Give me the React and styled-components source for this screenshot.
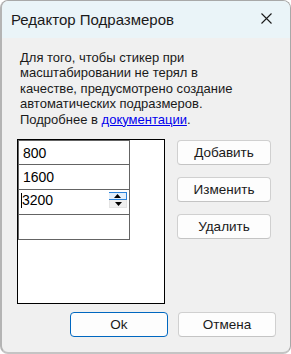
import React from "react";
import styled, { createGlobalStyle } from "styled-components";

const Global = createGlobalStyle`
  html, body {
    margin: 0;
    padding: 0;
    background: #ffffff;
  }
  body {
    font-family: "Liberation Sans", Arial, sans-serif;
  }
`;

const sizes = ["800", "1600", "3200", ""];
const sideButtons = ["Добавить", "Изменить", "Удалить"];

function Spinner() {
  return (
    <Spin>
      <SpinHalf active>
        <svg width="7" height="4" viewBox="0 0 7 4">
          <path d="M0 4 L3.5 0 L7 4 Z" fill="#000" />
        </svg>
      </SpinHalf>
      <SpinHalf>
        <svg width="7" height="4" viewBox="0 0 7 4">
          <path d="M0 0 L3.5 4 L7 0 Z" fill="#000" />
        </svg>
      </SpinHalf>
    </Spin>
  );
}

export default function App() {
  return (
    <>
      <Global />
      <Window>
        <TitleBar>
          <Title>Редактор Подразмеров</Title>
          <Close>
            <svg width="11" height="11" viewBox="0 0 11 11">
              <path d="M0.5 0.5 L10.5 10.5 M10.5 0.5 L0.5 10.5" stroke="#1a1a1a" strokeWidth="1.1" />
            </svg>
          </Close>
        </TitleBar>
        <Body>
          <Description>
            Для того, чтобы стикер при масштабировании не терял в качестве,
            предусмотрено создание автоматических подразмеров.
            <br />
            Подробнее в <Link>документации</Link>.
          </Description>
          <Content>
            <ListBox>
              <Grid>
                {sizes.map((s, i) => (
                  <Cell key={i} editing={i === 2}>
                    {i === 2 && <Caret />}
                    <CellText editing={i === 2}>{s}</CellText>
                    {i === 2 && <Spinner />}
                  </Cell>
                ))}
              </Grid>
            </ListBox>
            <SideButtons>
              {sideButtons.map((b) => (
                <Button key={b} width={94}>{b}</Button>
              ))}
            </SideButtons>
          </Content>
          <Footer>
            <Button width={98} primary>Ok</Button>
            <Button width={98}>Отмена</Button>
          </Footer>
        </Body>
      </Window>
    </>
  );
}

const Window = styled.div`
  box-sizing: border-box;
  width: 291px;
  height: 354px;
  display: flex;
  flex-direction: column;
  background: #f0f0f0;
  border: 1px solid #a8a8a8;
  border-left: 2px solid #b4b4b4;
  border-bottom: 2px solid #c4c4c4;
  border-radius: 8px;
  overflow: hidden;
`;

const TitleBar = styled.div`
  height: 37px;
  flex: none;
  display: flex;
  align-items: center;
  justify-content: space-between;
  padding: 0 18px 0 9px;
  background: #eaf4f8;
`;

const Title = styled.div`
  font-family: "Liberation Sans", Arial, sans-serif;
  font-size: 15px;
  color: #1a1a1a;
  padding-bottom: 1px;
`;

const Close = styled.div`
  display: flex;
  align-items: center;
  margin-bottom: 2px;
`;

const Body = styled.div`
  flex: 1;
  display: flex;
  flex-direction: column;
  padding: 12px 14px 0 15px;
`;

const Description = styled.div`
  font-family: "Liberation Sans", Arial, sans-serif;
  font-size: 13px;
  line-height: 15.4px;
  color: #1a1a1a;
  padding-left: 3px;
  padding-right: 30px;
`;

const Link = styled.span`
  color: #0000ee;
  text-decoration: underline;
`;

const Content = styled.div`
  display: flex;
  margin-top: 12px;
`;

const ListBox = styled.div`
  box-sizing: border-box;
  width: 148px;
  height: 165px;
  border: 1px solid #000;
  background: #fff;
`;

const Grid = styled.div`
  width: 111px;
  display: flex;
  flex-direction: column;
  border-right: 1px solid #646464;
`;

const Cell = styled.div`
  box-sizing: border-box;
  height: 25px;
  display: flex;
  align-items: center;
  padding-left: ${(p) => (p.editing ? "2px" : "4px")};
  border-bottom: 1px solid #646464;
  border-left: 1px solid #646464;
  &:first-child {
    border-top: 1px solid #646464;
  }
`;

const CellText = styled.span`
  font-family: "Liberation Sans", Arial, sans-serif;
  font-size: 14px;
  color: #000;
  flex: 1;
  margin-top: ${(p) => (p.editing ? "-4px" : "0")};
`;

const Caret = styled.div`
  width: 1px;
  height: 15px;
  background: #000;
  margin-top: -4px;
`;

const Spin = styled.div`
  display: flex;
  flex-direction: column;
  width: 18px;
  margin-right: 2px;
  margin-top: -4px;
`;

const SpinHalf = styled.div`
  box-sizing: border-box;
  height: 8px;
  display: flex;
  align-items: center;
  justify-content: center;
  background: ${(p) => (p.active ? "#e3effb" : "#f0f0f0")};
  border: 1px solid ${(p) => (p.active ? "#2a82da" : "#e4e4e4")};
  ${(p) => (p.active ? "border-left: none; border-top-color: #2a82da;" : "border-top: none;")}
`;

const SideButtons = styled.div`
  display: flex;
  flex-direction: column;
  gap: 12px;
  margin-left: 12px;
  padding-top: 1px;
`;

const Button = styled.div`
  box-sizing: border-box;
  width: ${(p) => p.width}px;
  height: 25px;
  display: flex;
  align-items: center;
  justify-content: center;
  font-family: "Liberation Sans", Arial, sans-serif;
  font-size: 13.5px;
  color: #1a1a1a;
  background: #fdfdfd;
  border: 1px solid ${(p) => (p.primary ? "#0067c0" : "#d0d0d0")};
  border-radius: 4px;
  ${(p) => (p.primary ? "" : "border-bottom-color: #c4c4c4;")}
`;

const Footer = styled.div`
  display: flex;
  justify-content: flex-end;
  gap: 10px;
  margin-top: 8px;
`;
